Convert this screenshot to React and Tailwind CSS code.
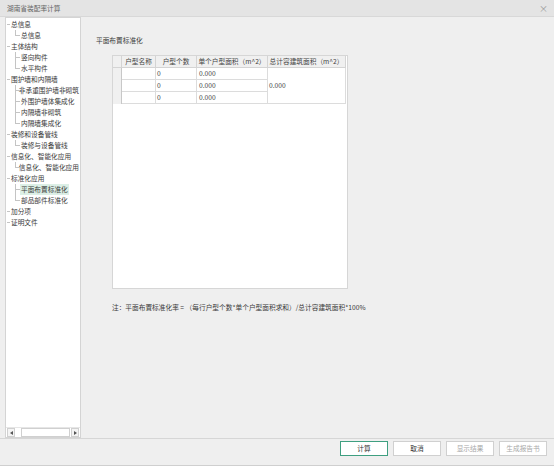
const TREE = [
  { label: "总信息", level: 0 },
  { label: "总信息", level: 1, last: true },
  { label: "主体结构", level: 0 },
  { label: "竖向构件", level: 1 },
  { label: "水平构件", level: 1, last: true },
  { label: "围护墙和内隔墙", level: 0 },
  { label: "非承重围护墙非砌筑", level: 1 },
  { label: "外围护墙体集成化", level: 1 },
  { label: "内隔墙非砌筑", level: 1 },
  { label: "内隔墙集成化", level: 1, last: true },
  { label: "装修和设备管线", level: 0 },
  { label: "装修与设备管线", level: 1, last: true },
  { label: "信息化、智能化应用", level: 0 },
  { label: "信息化、智能化应用", level: 1, last: true },
  { label: "标准化应用", level: 0 },
  { label: "平面布置标准化", level: 1, selected: true },
  { label: "部品部件标准化", level: 1, last: true },
  { label: "加分项", level: 0 },
  { label: "证明文件", level: 0 },
];

const HEADERS = ["户型名称", "户型个数", "单个户型面积（m^2）", "总计容建筑面积（m^2）"];

const BUTTONS = [
  { label: "计算", primary: true },
  { label: "取消" },
  { label: "显示结果", disabled: true },
  { label: "生成报告书", disabled: true },
];

function TreeRow({ item }) {
  if (item.level === 0) {
    return (
      <div className="flex items-center h-[11px]">
        <span className="w-[3px] border-t border-[#c4c4c4] mr-[1px]" />
        <span className="whitespace-nowrap leading-none">{item.label}</span>
      </div>
    );
  }
  return (
    <div className="flex h-[11px] pl-[8px]">
      <div className="relative w-[5px] h-full">
        <span
          className={`absolute left-0 top-0 border-l border-[#c4c4c4] ${
            item.last ? "h-[6px]" : "h-full"
          }`}
        />
        <span className="absolute left-0 top-[5px] w-[5px] border-t border-[#c4c4c4]" />
      </div>
      <span
        className={`whitespace-nowrap leading-[11px] px-[1px] ${
          item.selected ? "bg-[#dcefe6]" : ""
        }`}
      >
        {item.label}
      </span>
    </div>
  );
}

export default function App() {
  return (
    <div
      className="w-[554px] h-[466px] bg-[#efefef] flex flex-col text-[6.7px] text-[#3a3a3a] border-b border-[#cfcfcf] overflow-hidden"
      style={{ fontFamily: '"Noto Sans CJK SC", "Noto Sans", sans-serif' }}
    >
      {/* Title bar */}
      <div className="h-[17px] shrink-0 bg-[#e4e4e4] border-b border-[#d8d8d8] flex items-center justify-between pl-[7px] pr-[6px] text-[#666]">
        <span>湖南省装配率计算</span>
        <span className="text-[9px] text-[#999] leading-none">×</span>
      </div>

      {/* Main area */}
      <div className="flex-1 flex border-b border-[#d6d6d6] min-h-0">
        {/* Left tree */}
        <div className="ml-[5px] w-[76px] flex flex-col bg-white border border-[#d4d4d4]">
          <div className="flex-1 pt-[1px] pl-[1px] overflow-hidden">
            {TREE.map((item, i) => (
              <TreeRow key={i} item={item} />
            ))}
          </div>
          <div className="h-[10px] flex items-center border-t border-[#e6e6e6]">
            <div className="w-[8px] h-[9px] mx-[1px] border border-[#d0d0d0] bg-[#f4f4f4] flex items-center justify-center">
              <span className="w-0 h-0 border-y-[2.5px] border-y-transparent border-r-[3px] border-r-[#555]" />
            </div>
            <div className="ml-[5px] flex-1 h-[9px] border border-[#d0d0d0] bg-white" />
            <div className="w-[8px] h-[9px] mx-[1px] border border-[#d0d0d0] bg-[#f4f4f4] flex items-center justify-center">
              <span className="w-0 h-0 border-y-[2.5px] border-y-transparent border-l-[3px] border-l-[#555]" />
            </div>
          </div>
        </div>

        {/* Right content */}
        <div className="flex-1 pl-[15px] pt-[18px]">
          <div className="h-[10px] leading-[10px]">平面布置标准化</div>
          <div className="mt-[10px] ml-[16px] w-[236px] h-[234px] bg-white border border-[#d6d6d6]">
            <div className="grid grid-cols-[9px_34px_41px_71px_78px] grid-rows-[12px_12px_12px_12px] text-[#444]">
              <div className="bg-[#f0f0f0] border-b border-r border-[#d4d4d4]" />
              {HEADERS.map((h) => (
                <div
                  key={h}
                  className="bg-[#f0f0f0] border-b border-r border-[#d4d4d4] flex items-center justify-center whitespace-nowrap"
                >
                  {h}
                </div>
              ))}
              {[0, 1, 2].map((r) => [
                <div
                  key={`rh${r}`}
                  className="bg-[#f0f0f0] border-r border-[#c8c8c8] col-start-1"
                  style={{ gridRow: r + 2 }}
                />,
                <div key={`a${r}`} className="border-b border-r border-[#dcdcdc]" style={{ gridRow: r + 2 }} />,
                <div key={`b${r}`} className="border-b border-r border-[#dcdcdc] pl-[1px] flex items-center" style={{ gridRow: r + 2 }}>
                  0
                </div>,
                <div key={`c${r}`} className="border-b border-r border-[#dcdcdc] pl-[2px] flex items-center" style={{ gridRow: r + 2 }}>
                  0.000
                </div>,
              ])}
              <div className="col-start-5 row-start-2 row-span-3 border-b border-r border-[#dcdcdc] pl-[1px] flex items-center">
                0.000
              </div>
            </div>
          </div>
          <div className="mt-[13px] ml-[16px] whitespace-nowrap">
            注：平面布置标准化率 = （每行户型个数*单个户型面积求和）/总计容建筑面积*100%
          </div>
        </div>
      </div>

      {/* Bottom buttons */}
      <div className="h-[26px] shrink-0 flex items-start justify-end gap-[5px] pt-[2px] pr-[7px]">
        {BUTTONS.map((b) => (
          <div
            key={b.label}
            className={`w-[48px] h-[15px] bg-white flex items-center justify-center ${
              b.primary
                ? "border-[1.5px] border-[#3f9f80]"
                : "border border-[#d0d0d0]"
            } ${b.disabled ? "text-[#a8a8a8]" : "text-[#333]"}`}
          >
            {b.label}
          </div>
        ))}
      </div>
    </div>
  );
}
